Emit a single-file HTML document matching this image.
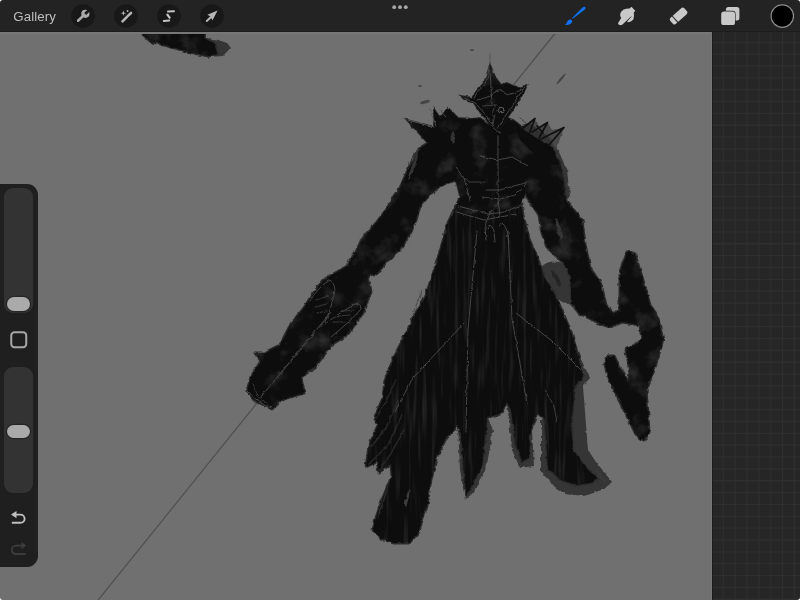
<!DOCTYPE html>
<html><head><meta charset="utf-8">
<style>
html,body{margin:0;padding:0;width:800px;height:600px;overflow:hidden;background:#707070;font-family:"Liberation Sans",sans-serif;}
#top{position:absolute;left:0;top:0;width:800px;height:32px;background:#232323;box-shadow:inset 0 -1px 0 #1c1c1c;}
#edge{position:absolute;left:0;top:32px;width:712px;height:1.5px;background:#777;}
#gal{position:absolute;left:13.3px;top:8.6px;font-size:13.3px;color:#bdbdbd;letter-spacing:0.1px;z-index:2;opacity:0.999;}
#right{position:absolute;left:712px;top:32px;width:88px;height:568px;background:#262626;}
#side{position:absolute;left:0;top:184px;width:37.5px;height:383px;background:#1f1f1f;border-radius:0 11px 11px 0;}
.track{position:absolute;left:3.8px;width:29.5px;background:#333333;border-radius:9px;}
.handle{position:absolute;left:6.7px;width:23.7px;height:13.6px;background:#aaaaaa;border-radius:7px;box-shadow:0 0 0 1.2px #262626;}
svg{position:absolute;left:0;top:0;}
</style></head><body>
<svg width="800" height="600" viewBox="0 0 800 600">
  <defs>
    <filter id="rough" x="-5%" y="-5%" width="110%" height="110%">
      <feTurbulence type="fractalNoise" baseFrequency="0.18" numOctaves="2" seed="3" result="n"/>
      <feDisplacementMap in="SourceGraphic" in2="n" scale="3.5" xChannelSelector="R" yChannelSelector="G"/>
    </filter>
    <filter id="rough2" x="-5%" y="-5%" width="110%" height="110%">
      <feTurbulence type="fractalNoise" baseFrequency="0.2" numOctaves="2" seed="11" result="n"/>
      <feDisplacementMap in="SourceGraphic" in2="n" scale="3" xChannelSelector="R" yChannelSelector="G"/>
    </filter>
    <filter id="mottle" x="0" y="0" width="800" height="600" filterUnits="userSpaceOnUse" color-interpolation-filters="sRGB">
      <feTurbulence type="fractalNoise" baseFrequency="0.045" numOctaves="4" seed="5" result="n"/>
      <feColorMatrix in="n" type="matrix" values="0 0 0 0 0.2  0 0 0 0 0.2  0 0 0 0 0.2  2.4 0 0 0 -1.25" result="m"/>
      <feComposite in="m" in2="SourceAlpha" operator="in" result="mc"/>
      <feMerge><feMergeNode in="SourceGraphic"/><feMergeNode in="mc"/></feMerge>
    </filter>
    <filter id="streak" x="0" y="0" width="800" height="600" filterUnits="userSpaceOnUse" color-interpolation-filters="sRGB">
      <feTurbulence type="fractalNoise" baseFrequency="0.22 0.018" numOctaves="2" seed="9" result="n"/>
      <feColorMatrix in="n" type="matrix" values="0 0 0 0 0.16  0 0 0 0 0.16  0 0 0 0 0.16  2.6 0 0 0 -1.35" result="m"/>
      <feComposite in="m" in2="SourceAlpha" operator="in" result="mc"/>
      <feMerge><feMergeNode in="SourceGraphic"/><feMergeNode in="mc"/></feMerge>
    </filter>
    <filter id="soft" x="-10%" y="-10%" width="120%" height="120%">
      <feGaussianBlur stdDeviation="2.5"/>
    </filter>
    <g id="shapes">
      <polygon points="140,32 150,41 167,46 190,52 208,56 217,54 215,44 204,38 205,32"/>
      <!-- left arm -->
      <polygon points="428,143 420,148 414,160 408,170 400,188 394,196 387,209 377,222 368,232 361,241 356,252 348,264 351,268 376,274 388,260 400,250 410,234 416,220 420,206 430,194 444,182 454,174 462,150 445,140"/>
      <!-- weapon -->
      <polygon points="357,260 344,268 325,279 312,295 304,308 291,324 280,345 264,353 255,353 261,361 251,377 247,391 256,401 272,409 283,399 304,393 301,377 315,367 331,345 347,335 363,313 371,292 368,276 380,271 372,262"/>
      <!-- right arm -->
      <polygon points="550,140 563,180 566,201 582,220 585,244 590,268 601,284 606,305 612,312 622,312 622,322 610,327 601,324 579,313 571,303 571,276 563,263 547,247 542,233 539,215 527,197 525,190 530,170"/>
      <!-- scythe -->
      <polygon points="627,252 635,255 642,277 650,305 657,315 663,340 660,350 654,370 646,390 648,414 649,434 644,439 640,439 636,434 626,414 618,398 608,378 605,364 608,356 614,356 618,364 628,382 630,374 628,360 626,350 640,342 642,340 640,325 622,322 620,303 620,272"/>
    </g>
    <g id="robe">
      <!-- robe and legs -->
      <polygon points="456,206 520,199 523,215 529,239 537,257 545,279 555,295 563,313 571,332 576,349 583,376 575,386 571,425 573,450 585,467 598,479 590,483 576,485 562,480 548,468 545,420 537,412 530,432 529,458 522,461 516,445 511,410 507,402 500,414 487,417 482,465 472,485 466,495 461,434 457,425 445,440 436,458 430,485 427,506 418,533 409,543 394,543 382,539 373,530 376,518 382,500 392,476 391,464 379,472 377,461 366,467 369,446 378,425 374,419 383,398 385,380 396,353 408,330 416,313 427,292 435,268 443,241 448,223"/>
    </g>
    <g id="sharp">
      <!-- helmet -->
      <polygon points="490,65 495,77 501,85 507,83 513,86 520,88 527,85 522,96 514,108 507,118 500,130 495,132 488,121 480,112 474,103 465,100 461,96 472,98 476,92 484,83 487,75"/>
      <!-- torso -->
      <polygon points="428,143 407,120 434,127 434,109 440,118 448,108 458,118 472,119 480,118 490,125 500,130 507,118 513,120 521,126 530,124 540,132 549,138 552,150 560,162 565,190 558,196 527,190 519,207 460,215 456,206 460,196 456,180 440,186 428,196"/>
    </g>
  </defs>
  <line x1="556.2" y1="32" x2="98.2" y2="600" stroke="#505050" stroke-width="1.2"/>
  <g filter="url(#rough)" fill="#353535">
    <path d="M541,268 C545,261 556,259 566,265 C572,270 578,282 578,293 C578,301 570,305 562,302 C556,298 550,291 546,285 C542,279 539,273 541,268 Z"/>
    <polygon points="548,140 558,150 567,170 570,196 562,202 552,172"/>
    <polygon points="576,349 590,378 583,386 586,425 588,450 596,462 612,482 604,489 585,496 565,494 555,487 541,472 541,420 560,420"/>
    <polygon points="507,402 515,404 521,440 532,430 534,466 520,468 512,450"/>
    <polygon points="458,425 466,432 470,485 482,470 488,418 493,430 486,470 474,492 465,500 460,470"/>
    <polygon points="203,37 218,40 227,43 231,48 224,56 208,57"/>
    <polygon points="428,142 414,152 405,175 399,192 412,186 422,165"/>
  </g>
  <g>
    <use href="#shapes" fill="#2c2c2c" stroke="#2c2c2c" stroke-width="3" stroke-linejoin="round" filter="url(#rough)"/>
    <use href="#robe" fill="#2c2c2c" stroke="#2c2c2c" stroke-width="3" stroke-linejoin="round" filter="url(#rough)"/>
    <use href="#sharp" fill="#2c2c2c" stroke="#2c2c2c" stroke-width="2" stroke-linejoin="miter" filter="url(#rough2)"/>
  </g>
  <g filter="url(#streak)"><use href="#robe" fill="#0b0b0b" filter="url(#rough)"/></g>
  <g filter="url(#mottle)">
    <use href="#shapes" fill="#0d0d0d" filter="url(#rough)"/>
    <use href="#sharp" fill="#0d0d0d" filter="url(#rough2)"/>
  </g>
  <g fill="none" stroke="#2a2a2a" stroke-width="1.5" stroke-linecap="round" filter="url(#rough2)" opacity="0.9">
    <path d="M396,380 L384,405 L376,418"/>
    <path d="M398,400 L386,428 L371,447"/>
    <path d="M402,415 L388,445 L369,464"/>
    <path d="M404,430 L390,455 L379,470"/>
  </g>
  <g fill="#3a3a3a" filter="url(#rough)" opacity="0.85">
    <path d="M556,218 C560,224 563,232 562,242 C559,236 555,228 556,218 Z"/>
    <path d="M551,270 C556,272 560,278 561,286 C557,283 552,277 551,270 Z" fill="#202020"/>
    <path d="M418,150 C414,160 410,170 407,180 C412,176 418,164 418,150 Z"/>
    <path d="M410,488 C409,496 408,503 405,510 C404,503 406,494 410,488 Z" fill="#454545"/>
    <path d="M390,480 C386,492 380,505 377,520 C381,512 386,498 390,480 Z" fill="#2e2e2e"/>
    <path d="M596,470 C602,475 606,480 608,484 C602,482 598,477 596,470 Z" fill="#3a3a3a"/>
    <path d="M453,131 C456,136 456,140 452,144 C450,140 450,135 453,131 Z"/>
  </g>
  <!-- light detail lines -->
  <g fill="none" stroke="#4c4c4c" stroke-width="0.9" stroke-linecap="round" filter="url(#rough2)">
    <!-- helmet -->
    <path d="M489,67 L487.5,77.5 L484.5,85 L477,92.5 L474,98.5"/>
    <path d="M465,98.5 L475.5,103 L484.5,113.5 L493.5,125.5"/>
    <path d="M477,100 L486,97.7 L499.5,89.5 L507,94.7 L516,92.5 L525,87"/>
    <path d="M481.5,106 L496.5,105" stroke="#3c3c3c"/>
    <path d="M490,70 L492,104"/>
    <ellipse cx="501" cy="110.5" rx="3" ry="2.2" stroke="#666"/>
    <path d="M523.5,88.7 L513,104.5 L504,118 L498,128.5"/>
    <path d="M495,104.5 L492,115 L493.5,124" stroke="#3c3c3c"/>
    <!-- left shoulder spike highlights -->
    <path d="M408,120 L434,127" stroke="#555"/>
    <path d="M430,109 L436,126" stroke="#555"/>
    <path d="M440,110 L446,117" stroke="#4a4a4a"/>
    <!-- chest -->
    <path d="M498,136 L498,200 L500,216"/>
    <path d="M480,156 L498,160 L512,157 L528,166"/>
    <path d="M486,190 L500,190 L528,182"/>
    <path d="M456,168 L464,178 L470,200"/>
    <path d="M458,206 L488,214 L504,212 L524,204"/>
    <path d="M456,212 L484,220 L516,214"/>
    <path d="M486,240 L485,226 L489,215 L495,207 L500,200"/>
    <path d="M487,228 Q490,221 494,231 L495,242"/>
    <path d="M499,226 Q503,219 507,231 L509,242"/>
    <path d="M460,175 L470,182 L485,182" stroke="#444"/>
    <path d="M482,197 L500,199 L515,195 L527,183" stroke="#444"/>
    <path d="M495,115 L492,127 L500,133" stroke="#444"/>
    <path d="M520,118 L527,124 M542,143 L550,140" stroke="#3a3a3a"/>
    <!-- robe folds -->
    <path d="M477,231 L468,330 L466,432"/>
    <path d="M508,231 L512,319 L527,403"/>
    <path d="M464,323 L413,378 L395,411"/>
    <path d="M516,313 L552,341 L585,374"/>
    <path d="M545,390 L554,406 L557,422" stroke="#444"/>
    <path d="M422,290 L416,306 L410,322" stroke="#444"/>
    <!-- weapon -->
    <path d="M259,399 L331,312"/>
    <path d="M261,397 L329,316" stroke="#3a3a3a"/>
    <path d="M310,301 Q318,287 330,280 Q337,286 334,295 Q331,310 325,322"/>
    <path d="M316,300 L328,296 M314,307 L327,304 M318,313 L326,311" stroke="#3c3c3c"/>
    <path d="M325,324 Q340,312 357,303 Q362,305 361,309 Q352,320 331,337"/>
    <path d="M333,322 L345,322 M338,316 L350,315 M344,311 L354,310" stroke="#3c3c3c"/>
    <path d="M247,390 Q258,404 272,408"/>
    <path d="M253,384 Q255,396 268,404" stroke="#3a3a3a"/>
  </g>
  <!-- right shoulder spikes (thin dark strokes) -->
  <polygon points="520,128 535,119 540,128 547.5,122.5 552,130 564,127.5 556,150 540,140" fill="#3a3a3a" opacity="0.75" filter="url(#rough2)"/>
  <g fill="none" stroke="#111" stroke-width="1.7" stroke-linecap="round" stroke-linejoin="round">
    <path d="M522,129 L535,118.5 L529,134"/>
    <path d="M532,132 L547.5,122.5 L539,138"/>
    <path d="M537,126 L543,133"/>
    <path d="M541,139 L564,127.5 L549,145"/>
  </g>
  <path d="M512,120 L520,127 L530,134 L540,140 L550,147 L555,155 L559,165 L545,165 L520,140 Z" fill="#0d0d0d"/>
  <!-- faint marks near head -->
  <g fill="#3c3c3c" opacity="0.8">
    <ellipse cx="425" cy="102" rx="5" ry="1.6" transform="rotate(-15 425 102)"/>
    <ellipse cx="561" cy="79" rx="1.1" ry="7" transform="rotate(40 561 79)"/>
    <ellipse cx="490" cy="58" rx="0.7" ry="5" opacity="0.5"/>
    <ellipse cx="472" cy="50" rx="2" ry="1"/>
    <ellipse cx="420" cy="86" rx="2" ry="1"/>
  </g>
</svg>

<div id="top"></div>
<div id="edge"></div>
<div id="gal">Gallery</div>
<svg width="800" height="32" viewBox="0 0 800 32" style="position:absolute;left:0;top:0">
  <g fill="#181818">
    <circle cx="83" cy="16" r="11.8"/>
    <circle cx="126" cy="16" r="11.8"/>
    <circle cx="169" cy="16" r="11.8"/>
    <circle cx="212" cy="16" r="11.8"/>
  </g>
  <!-- wrench -->
  <mask id="wm"><rect x="70" y="0" width="30" height="32" fill="#fff"/><rect x="-1.4" y="-7" width="2.8" height="7.6" fill="#000" transform="translate(85.6,13.6) rotate(45)"/></mask>
  <g mask="url(#wm)">
    <line x1="77.8" y1="21" x2="83.5" y2="15.5" stroke="#a9a9a9" stroke-width="2.5" stroke-linecap="round"/>
    <circle cx="85.4" cy="13.8" r="4.1" fill="#a9a9a9"/>
  </g>
  <!-- wand -->
  <g fill="#b5b5b5">
    <line x1="122.5" y1="21.4" x2="127" y2="16.8" stroke="#b5b5b5" stroke-width="2.6" stroke-linecap="round"/>
    <line x1="127.9" y1="15.9" x2="131" y2="13" stroke="#b5b5b5" stroke-width="2.6" stroke-linecap="round"/>
    <path d="M123.4,10.3 L124,12.6 L126.2,13.2 L124,13.8 L123.4,16.1 L122.8,13.8 L120.6,13.2 L122.8,12.6 Z"/>
    <circle cx="127.6" cy="11" r="0.9"/>
  </g>
  <!-- S -->
  <g stroke="#c4c4c4" stroke-width="2" stroke-linecap="round" fill="none">
    <line x1="168" y1="11.4" x2="174" y2="11.2"/>
    <line x1="167.4" y1="14.6" x2="169.6" y2="17.6" stroke-width="2.3"/>
    <line x1="163.8" y1="21" x2="169.2" y2="20.6"/>
  </g>
  <!-- arrow -->
  <g fill="#b5b5b5">
    <line x1="206.8" y1="21" x2="211" y2="17" stroke="#b5b5b5" stroke-width="2" stroke-linecap="round"/>
    <path d="M217.6,10.4 L207.4,14.8 L210.6,16.4 L212.4,20.4 Z"/>
  </g>
  <!-- dots -->
  <g fill="#a8a8a8"><circle cx="394.2" cy="7.2" r="1.9"/><circle cx="400" cy="7.2" r="1.9"/><circle cx="405.8" cy="7.2" r="1.9"/></g>
  <!-- brush -->
  <g fill="#0f72f5">
    <path d="M572.7,18.8 L584.3,9.9 Q586,8.3 585.4,6.9 Q584,6.5 582.3,7.7 L572.1,17.9 Z"/>
    <path d="M564.6,24.9 C566.4,24.2 566.8,22.4 567.5,21.2 C568.5,19.6 570.8,19.1 571.9,20.2 C572.8,21.3 571.8,23.2 570.3,24 C568.7,24.9 566.4,25.2 564.6,24.9 Z"/>
  </g>
  <!-- smudge -->
  <path fill="#c8c8c8" d="M618.6,24.6 Q617.6,23.6 618.4,22.6 L621.2,17.9 Q619.8,16.4 620.2,14.2 Q621,11 623.6,9.4 Q626.6,8.4 629.6,8.5 L631.5,6.7 L635.4,10.9 L633.8,12.3 Q634.4,16.4 633.4,19.6 Q631.2,22 628,22.3 Q626.8,21.8 627.4,21 L630.2,17.6 L622.2,24.8 Q620.4,25.6 618.6,24.6 Z"/>
  <path d="M631.2,16.6 L625.4,22.6" stroke="#232323" stroke-width="0.9" fill="none"/>
  <!-- eraser -->
  <g transform="translate(678.6,16) rotate(-42)">
    <rect x="-9.4" y="-4.1" width="18.8" height="8.2" rx="2.2" fill="#c8c8c8"/>
    <line x1="-4.8" y1="-5" x2="-4.8" y2="5" stroke="#232323" stroke-width="1.1"/>
  </g>
  <!-- layers -->
  <rect x="725.9" y="6.9" width="13.5" height="13.5" rx="2.5" fill="#c8c8c8"/>
  <rect x="720.4" y="10.7" width="15.2" height="15" rx="3.2" fill="#232323"/>
  <rect x="721.2" y="11.4" width="13.8" height="13.6" rx="2.6" fill="#c8c8c8"/>
  <!-- color -->
  <circle cx="782.3" cy="16.1" r="11.2" fill="#000" stroke="#8c8c8c" stroke-width="1.2"/>
</svg>
<div id="right"></div>
<svg width="800" height="600" style="position:absolute;left:0;top:0"><g stroke="#2e2e2e" stroke-width="1.3"><line x1="723.30" y1="32" x2="723.30" y2="600"/><line x1="735.15" y1="32" x2="735.15" y2="600"/><line x1="747.00" y1="32" x2="747.00" y2="600"/><line x1="758.85" y1="32" x2="758.85" y2="600"/><line x1="770.70" y1="32" x2="770.70" y2="600"/><line x1="782.55" y1="32" x2="782.55" y2="600"/><line x1="794.40" y1="32" x2="794.40" y2="600"/><line x1="712" y1="42.30" x2="800" y2="42.30"/><line x1="712" y1="54.15" x2="800" y2="54.15"/><line x1="712" y1="66.00" x2="800" y2="66.00"/><line x1="712" y1="77.85" x2="800" y2="77.85"/><line x1="712" y1="89.70" x2="800" y2="89.70"/><line x1="712" y1="101.55" x2="800" y2="101.55"/><line x1="712" y1="113.40" x2="800" y2="113.40"/><line x1="712" y1="125.25" x2="800" y2="125.25"/><line x1="712" y1="137.10" x2="800" y2="137.10"/><line x1="712" y1="148.95" x2="800" y2="148.95"/><line x1="712" y1="160.80" x2="800" y2="160.80"/><line x1="712" y1="172.65" x2="800" y2="172.65"/><line x1="712" y1="184.50" x2="800" y2="184.50"/><line x1="712" y1="196.35" x2="800" y2="196.35"/><line x1="712" y1="208.20" x2="800" y2="208.20"/><line x1="712" y1="220.05" x2="800" y2="220.05"/><line x1="712" y1="231.90" x2="800" y2="231.90"/><line x1="712" y1="243.75" x2="800" y2="243.75"/><line x1="712" y1="255.60" x2="800" y2="255.60"/><line x1="712" y1="267.45" x2="800" y2="267.45"/><line x1="712" y1="279.30" x2="800" y2="279.30"/><line x1="712" y1="291.15" x2="800" y2="291.15"/><line x1="712" y1="303.00" x2="800" y2="303.00"/><line x1="712" y1="314.85" x2="800" y2="314.85"/><line x1="712" y1="326.70" x2="800" y2="326.70"/><line x1="712" y1="338.55" x2="800" y2="338.55"/><line x1="712" y1="350.40" x2="800" y2="350.40"/><line x1="712" y1="362.25" x2="800" y2="362.25"/><line x1="712" y1="374.10" x2="800" y2="374.10"/><line x1="712" y1="385.95" x2="800" y2="385.95"/><line x1="712" y1="397.80" x2="800" y2="397.80"/><line x1="712" y1="409.65" x2="800" y2="409.65"/><line x1="712" y1="421.50" x2="800" y2="421.50"/><line x1="712" y1="433.35" x2="800" y2="433.35"/><line x1="712" y1="445.20" x2="800" y2="445.20"/><line x1="712" y1="457.05" x2="800" y2="457.05"/><line x1="712" y1="468.90" x2="800" y2="468.90"/><line x1="712" y1="480.75" x2="800" y2="480.75"/><line x1="712" y1="492.60" x2="800" y2="492.60"/><line x1="712" y1="504.45" x2="800" y2="504.45"/><line x1="712" y1="516.30" x2="800" y2="516.30"/><line x1="712" y1="528.15" x2="800" y2="528.15"/><line x1="712" y1="540.00" x2="800" y2="540.00"/><line x1="712" y1="551.85" x2="800" y2="551.85"/><line x1="712" y1="563.70" x2="800" y2="563.70"/><line x1="712" y1="575.55" x2="800" y2="575.55"/><line x1="712" y1="587.40" x2="800" y2="587.40"/><line x1="712" y1="599.25" x2="800" y2="599.25"/></g><line x1="712.5" y1="32" x2="712.5" y2="600" stroke="#1c1c1c" stroke-width="1"/><line x1="711.5" y1="32" x2="711.5" y2="600" stroke="#757575" stroke-width="1"/></svg>
<div id="side">
  <div class="track" style="top:3.5px;height:125.5px"></div>
  <div class="handle" style="top:113px"></div>
  <div class="track" style="top:183px;height:125.5px"></div>
  <div class="handle" style="top:240.7px"></div>

  <svg width="38" height="383" style="position:absolute;left:0;top:0">
    <rect x="11.25" y="148.25" width="15" height="15" rx="3.2" fill="none" stroke="#a8a8a8" stroke-width="2"/>
    <g transform="translate(0,-184)">
      <path d="M16.5,511 L11,514.6 L16.5,518.2 Z" fill="#c0c0c0"/>
      <path d="M15.5,514.6 L20.5,514.6 A4.1,4.1 0 0 1 20.5,522.8 L12.6,522.8" fill="none" stroke="#c0c0c0" stroke-width="1.9" stroke-linecap="round"/>
      <path d="M21.5,542 L26.2,545.6 L21.5,549.2 Z" fill="#3c3c3c"/>
      <path d="M22.5,545.6 L16,545.6 A4.2,4.2 0 0 0 16,554 L24.8,554" fill="none" stroke="#3c3c3c" stroke-width="1.9" stroke-linecap="round"/>
    </g>
  </svg>
</div>
<svg width="800" height="600" style="position:absolute;left:0;top:0;z-index:5"><g fill="#fff"><path d="M0,0 L3,0 A3,3 0 0 0 0,3 Z"/><path d="M800,0 L797,0 A3,3 0 0 1 800,3 Z"/><path d="M0,600 L3,600 A3,3 0 0 1 0,597 Z"/><path d="M800,600 L797,600 A3,3 0 0 0 800,597 Z"/></g></svg>
</body></html>
